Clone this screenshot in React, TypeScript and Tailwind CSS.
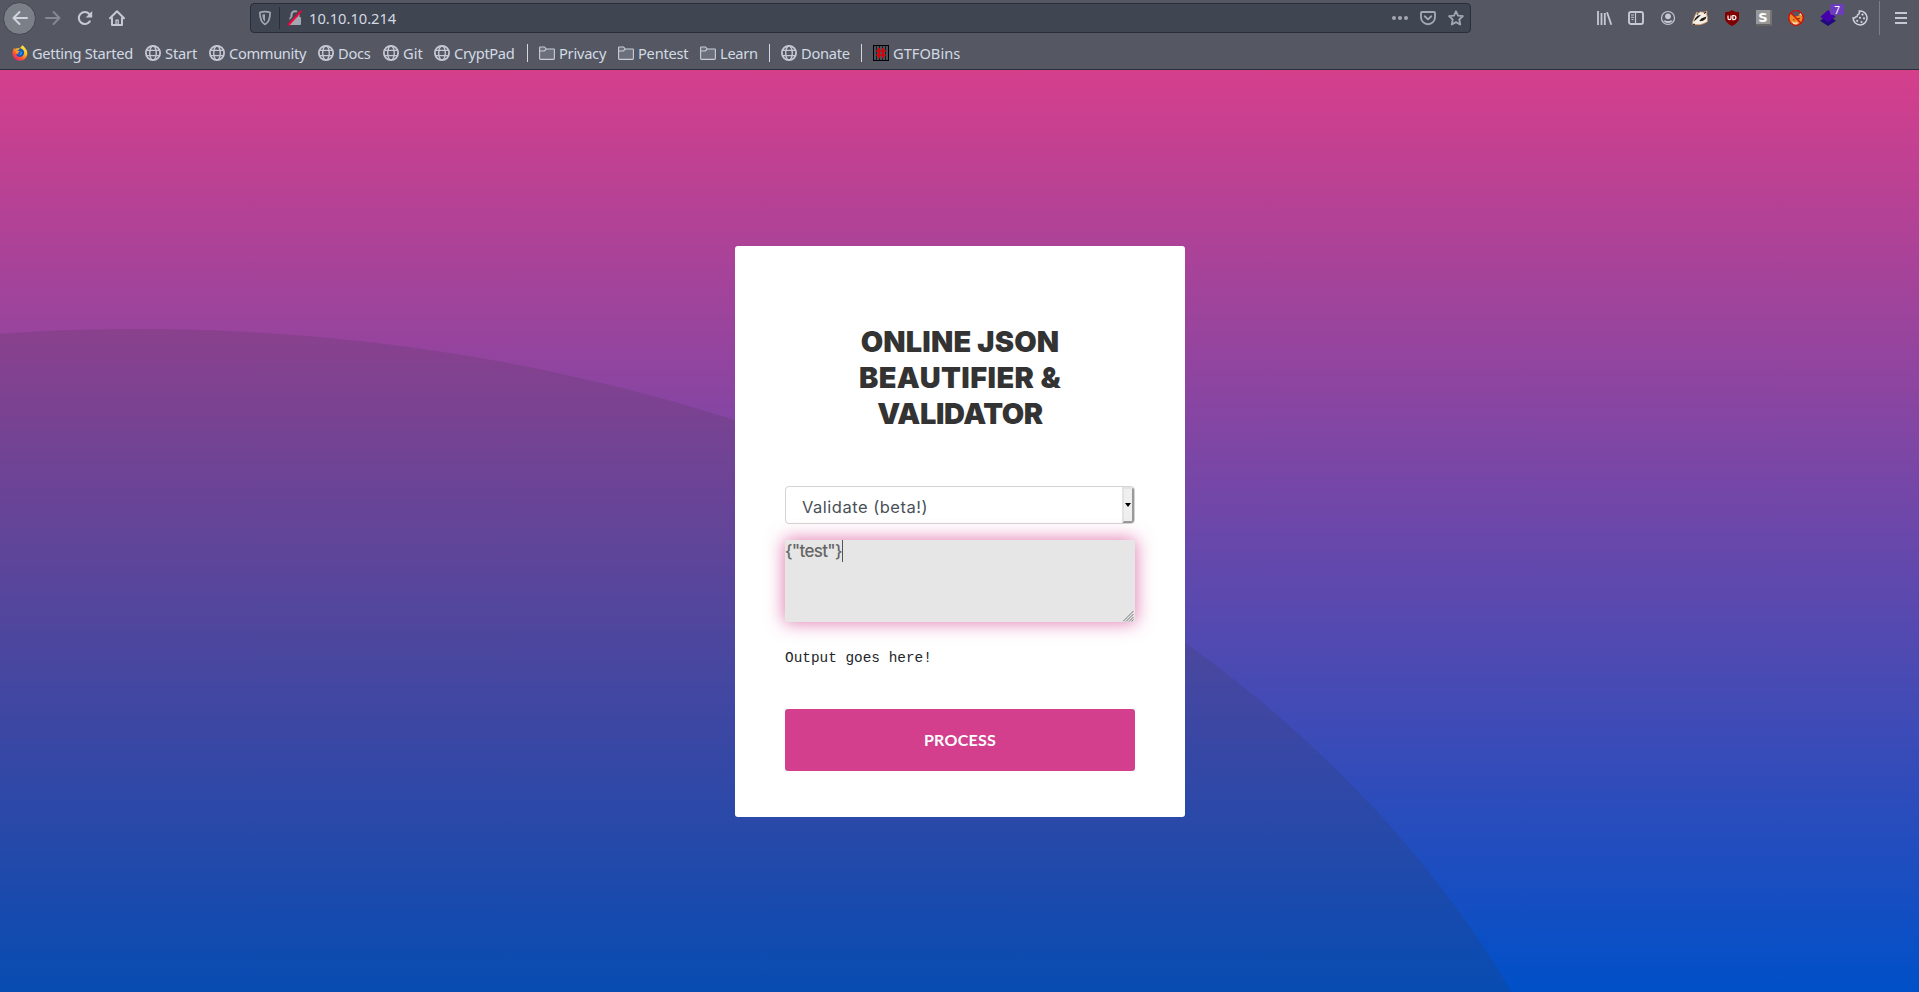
import type { ReactNode } from "react";

function Globe() {
  return (
    <svg width="16" height="16" viewBox="0 0 16 16" fill="none" stroke="#c5c9d4" strokeWidth="1.6" className="shrink-0">
      <circle cx="8" cy="8" r="7.1" strokeWidth="1.8" />
      <ellipse cx="8" cy="8" rx="3.3" ry="7" strokeWidth="1.4" />
      <path d="M1.6 5.3h12.8M1.6 10.7h12.8" strokeWidth="1.3" />
    </svg>
  );
}

function Folder() {
  return (
    <svg width="16" height="16" viewBox="0 0 16 16" className="shrink-0">
      <path
        d="M.6 13.6V2.6q0-.6.6-.6h4.4l1.6 2h7.6q.6 0 .6.6v9q0 .8-.8.8H1.4q-.8 0-.8-.8z"
        fill="#6b6f7b"
        stroke="#c9cdd6"
        strokeWidth="1.1"
      />
      <path d="M.8 6h4.6l1.8-1.8" fill="none" stroke="#c9cdd6" strokeWidth="1.1" />
    </svg>
  );
}

function Firefox() {
  return (
    <svg width="16" height="16" viewBox="0 0 16 16" className="shrink-0">
      <defs>
        <linearGradient id="flame" x1="0.85" y1="0" x2="0.15" y2="1">
          <stop offset="0" stopColor="#fff44f" />
          <stop offset="0.35" stopColor="#ffc01f" />
          <stop offset="0.65" stopColor="#ff5a2c" />
          <stop offset="1" stopColor="#e7157a" />
        </linearGradient>
      </defs>
      <path
        d="M10 .3c2.2 1.2 2.7 2.2 3.3 3.3.8.3 1.8 2 2 4.2C15.500 12.500 12 15.800 8 15.800S.500 12.600.500 8.300c0-2.300.8-4.200 2-5.500l.3 1.500c.8-.8 1.700-1 2.700-1C7 3.300 9.600 2.800 10 .3z"
        fill="url(#flame)"
      />
      <path d="M7.500 3.200c3 0 4.800 2.400 4.600 4.900-.2 2.400-1.900 4-4.100 3.900-2.100-.1-3.600-1.300-3.900-3.100 1 .7 2.300.6 3.300-.2H6C5 7.600 4.500 6.200 5.300 5.100c1.300.2 2-.6 2.200-1.900z" fill="#1556c4" />
      <path d="M8.300 5.800c1.500.5 2 2.200 1.100 3.500-.5.8-1.700 1-2.500.6 1.600-.6 2.300-2.200 1.400-4.100z" fill="#19b6ff" />
      <path d="M3.500 5.900c.8-.7 1.700-.7 2.600-.2l1.700.9-1.400 1.100-1 .8c-1 0-1.900-.9-1.900-2.600z" fill="#ff9b21" />
    </svg>
  );
}

function GtfoIcon() {
  return (
    <svg width="16" height="16" viewBox="0 0 16 16" className="shrink-0">
      <rect width="16" height="16" fill="#000" />
      <rect x="1" y="1" width="14" height="14" fill="#4e515a" />
      <path d="M3.500 1v14M6.500 1v14M9.500 1v14M12.500 1v14" stroke="#1c1e23" strokeWidth="1" />
      <path d="M6 3v10M10 3v10" stroke="#d0060c" strokeWidth="2" />
      <path d="M3 6h10M3 10h10" stroke="#d0060c" strokeWidth="1.600" />
    </svg>
  );
}

function Bookmark({ icon, label, className }: { icon: ReactNode; label: string; className: string }) {
  return (
    <a className={`flex h-full shrink-0 items-center gap-[4px] whitespace-nowrap ${className}`}>
      {icon}
      <span>{label}</span>
    </a>
  );
}

function Divider() {
  return (
    <div className="w-[12px] shrink-0">
      <div className="h-[18px] w-px bg-[#d3d6dd]" />
    </div>
  );
}

function Bookmarks() {
  return (
    <nav className="flex h-[33px] items-center pl-[12px] text-[14.667px] text-[#d3dae3]">
      <Bookmark icon={<Firefox />} label="Getting Started" className="w-[133px] tracking-[-0.3px]" />
      <Bookmark icon={<Globe />} label="Start" className="w-[64px] tracking-[-0.15px]" />
      <Bookmark icon={<Globe />} label="Community" className="w-[109px] tracking-[-0.35px]" />
      <Bookmark icon={<Globe />} label="Docs" className="w-[65px] tracking-[-0.25px]" />
      <Bookmark icon={<Globe />} label="Git" className="w-[51px]" />
      <Bookmark icon={<Globe />} label="CryptPad" className="w-[93px] tracking-[-0.35px]" />
      <Divider />
      <Bookmark icon={<Folder />} label="Privacy" className="w-[79px] tracking-[-0.25px]" />
      <Bookmark icon={<Folder />} label="Pentest" className="w-[82px] tracking-[-0.25px]" />
      <Bookmark icon={<Folder />} label="Learn" className="w-[69px] tracking-[-0.3px]" />
      <Divider />
      <Bookmark icon={<Globe />} label="Donate" className="w-[80px] tracking-[-0.3px]" />
      <Divider />
      <Bookmark icon={<GtfoIcon />} label="GTFOBins" className="w-[100px]" />
    </nav>
  );
}

function AddressBar() {
  return (
    <div className="flex h-[30px] w-[1221px] items-center rounded-[4px] border border-[#2b2e39] bg-[#404552] pl-[7px] pr-[6px]">
      <svg width="14" height="16" viewBox="0 0 14 16" fill="none">
        <path d="M7 1.600C5 1.600 3 2 1.900 2.500c0 5 .4 9.500 5.100 11.900 4.700-2.400 5.100-6.900 5.100-11.900C11 2 9 1.600 7 1.600z" stroke="#a3a7b2" strokeWidth="1.700" />
        <path d="M7 4.200c-1 0-1.800.1-2.600.4.1 3.300.4 5.500 2.600 7.100z" fill="#a3a7b2" />
      </svg>
      <div className="ml-[7px] h-[22px] w-px bg-[#2b2e39]" />
      <svg width="16" height="16" viewBox="0 0 16 16" fill="none" className="ml-[7px]">
        <path d="M4.500 8V4.800a3.500 3.500 0 0 1 7 0V8" stroke="#a3a7b2" strokeWidth="2" />
        <rect x="2.500" y="7" width="11.500" height="8" rx="1" fill="#a3a7b2" />
        <path d="M.2 14L12.600.4" stroke="#404552" strokeWidth="2" />
        <path d="M1.200 15.200L14.300.9" stroke="#f5033c" strokeWidth="2" />
      </svg>
      <span className="ml-[6px] text-[14.667px] text-[#d3dae3]">10.10.10.214</span>
      <div className="ml-auto flex items-center gap-[12px]">
        <svg width="16" height="16" viewBox="0 0 16 16" fill="#a3a7b2">
          <circle cx="2" cy="8" r="2" />
          <circle cx="8" cy="8" r="2" />
          <circle cx="14" cy="8" r="2" />
        </svg>
        <svg width="16" height="16" viewBox="0 0 16 16" fill="none" stroke="#a3a7b2" strokeWidth="1.900" strokeLinecap="round" strokeLinejoin="round">
          <path d="M2 2h12q1 0 1 1v4.200a7 7 0 0 1-14 0V3q0-1 1-1z" />
          <path d="M4.700 6.300L8 9.400l3.300-3.100" />
        </svg>
        <svg width="16" height="16" viewBox="0 0 16 16" fill="none" stroke="#a3a7b2" strokeWidth="1.800" strokeLinejoin="round">
          <path d="M8 1.300l2 4.300 4.900.6-3.600 3.300.9 5L8 12.100l-4.200 2.400.9-5L1.100 6.200 6 5.600z" />
        </svg>
      </div>
    </div>
  );
}

function ToolIcon({ children }: { children: ReactNode }) {
  return (
    <div className="flex h-8 w-8 items-center justify-center">
      <svg width="16" height="16" viewBox="0 0 16 16" fill="none" className="overflow-visible">
        {children}
      </svg>
    </div>
  );
}

function Extensions() {
  return (
    <div className="ml-auto flex items-center">
      <ToolIcon>
        <path d="M2 1v14M5.500 3v12M8.800 3v12" stroke="#c5c9d4" strokeWidth="1.800" />
        <path d="M11 2.200l4.300 12.600" stroke="#c5c9d4" strokeWidth="1.800" />
      </ToolIcon>
      <ToolIcon>
        <rect x="1" y="2" width="14" height="12" rx="2" stroke="#c5c9d4" strokeWidth="1.900" />
        <path d="M7.500 2v12" stroke="#c5c9d4" strokeWidth="1.200" />
        <path d="M3 5h3M3 7.300h3M3.500 9.600h2" stroke="#c5c9d4" />
      </ToolIcon>
      <ToolIcon>
        <circle cx="8" cy="8" r="6.500" stroke="#c5c9d4" strokeWidth="1.200" />
        <circle cx="8" cy="6.300" r="2.900" fill="#c5c9d4" />
        <path d="M3.400 10.500h2.300c1.200.8 3.400.8 4.600 0h2.300C11.500 12.300 10 13.200 8 13.200s-3.500-.9-4.600-2.700z" fill="#c5c9d4" />
      </ToolIcon>
      <ToolIcon>
        <path d="M3 5.500L4.500 2.300 6.500 3l2-1.200 3 .4L15 1l-.3 3 .9 3.500-.2 4.300-3.500 1.700-3.800 1.200H4L.3 14.500.8 11.500z" fill="#f6eee5" stroke="#cf8a50" strokeWidth=".7" />
        <path d="M3 8.500L5.500 5.700l3.500-1L7 7 4.500 9.300 1.800 11.500zM7.500 10.500l2.200-2.300 4.800-1.700-1 2.500-2.500 1.800-3 .5z" fill="#1e1e1e" />
        <path d="M4.700 4.300l1.500-.6M12 3.500l2-1.500M.8 14.200l2 .2" stroke="#222" strokeWidth="1.100" />
      </ToolIcon>
      <ToolIcon>
        <path d="M8 0C6 1.500 3.500 2.200 1 2.200v5.600c0 4 3 6.200 7 8.200 4-2 7-4.200 7-8.200V2.200C12.500 2.200 10 1.500 8 0z" fill="#800000" />
        <path d="M4 5.500v2.800q0 1.400 1.500 1.400T7 8.300V5.500" stroke="#fff" strokeWidth="1.200" />
        <path d="M8.800 5.500v4.200h1a2.100 2.100 0 0 0 0-4.200z" stroke="#fff" strokeWidth="1.200" />
      </ToolIcon>
      <div className="flex h-8 w-8 items-center justify-center">
        <div className="flex h-[16px] w-[16px] items-center justify-center border-b-2 border-r-2 border-b-[#656565] border-r-[#747474] bg-[#989898] font-['DejaVu_Sans'] text-[13px] font-bold leading-none text-white">
          S
        </div>
      </div>
      <ToolIcon>
        <path d="M1 7.500L2 3l3 2.500 3 1 3-1L14 2.500l1 5-1.500 4.200L9.500 15H6l-3.500-3z" fill="#ef8a24" />
        <path d="M3.500 11l3 1.500 3.500-.5-1 2.500-3 .3zM11 4.500l2.300-1.700.7 3z" fill="#f8dab1" />
        <path d="M9 8.800l3-.5M5 9.500l1.500.5" stroke="#913b10" strokeWidth="1.300" />
        <circle cx="8" cy="8" r="7.300" stroke="#d40d0d" strokeWidth="1.300" />
        <path d="M2.800 2.800l10.400 10.400" stroke="#d40d0d" strokeWidth="1.400" />
      </ToolIcon>
      <div className="relative">
        <ToolIcon>
          <path d="M8 5.500l8 5.300L8 16l-8-5.200z" fill="#210a7b" />
          <path d="M8 0l7.500 6.700L8 12.500.500 6.700z" fill="#4400aa" />
        </ToolIcon>
        <span className="absolute left-[18px] top-[2px] flex h-[11px] w-[14px] items-center justify-center rounded-[2px] bg-[#6c3cbb] text-[10px] leading-none text-white">
          7
        </span>
      </div>
      <ToolIcon>
        <path d="M8.700 1a7 7 0 1 0 6.200 7c-.9.3-1.900-.1-2.300-1-1.300.2-2.300-.8-2.100-2.100C9 4.400 8.200 2.800 8.700 1z" transform="matrix(-1 0 0 1 16 0)" stroke="#d0d3dc" strokeWidth="1.500" />
        <g fill="#d0d3dc">
          <circle cx="10.500" cy="4.600" r="1.100" />
          <circle cx="12" cy="8.300" r="1.100" />
          <circle cx="8" cy="7.800" r="1.100" />
          <circle cx="9.500" cy="12" r="1.100" />
          <circle cx="5.200" cy="10.800" r="1.100" />
        </g>
      </ToolIcon>
      <div className="ml-[3px] h-[34px] w-px bg-[#7b7f8a]" />
      <svg width="12" height="16" viewBox="0 0 12 16" className="ml-[15px]">
        <path d="M0 3h12M0 8h12M0 13h12" stroke="#c5c9d4" strokeWidth="2" />
      </svg>
    </div>
  );
}

function Toolbar() {
  return (
    <div className="flex h-[36px] items-center pl-[3px] pr-[12px]">
      <div className="flex h-[33px] w-[33px] items-center justify-center rounded-full border border-[#434651] bg-[#7b7f87]">
        <svg width="16" height="16" viewBox="0 0 16 16" fill="none" stroke="#d0d4dc" strokeWidth="2" strokeLinecap="round" strokeLinejoin="round">
          <path d="M15 8H1.500M7.500 2L1.500 8l6 6" />
        </svg>
      </div>
      <svg width="16" height="16" viewBox="0 0 16 16" fill="none" stroke="#858994" strokeWidth="2" strokeLinecap="round" strokeLinejoin="round" className="ml-[9px]">
        <path d="M1 8h13.500M8.500 2l6 6-6 6" />
      </svg>
      <svg width="16" height="16" viewBox="0 0 16 16" fill="none" className="ml-[16px]">
        <path d="M12.800 11.400A6 6 0 1 1 12.300 4" stroke="#c5c9d4" strokeWidth="2.100" strokeLinecap="round" />
        <path d="M15.200 1v6.500H8.700z" fill="#c5c9d4" />
      </svg>
      <svg width="16" height="16" viewBox="0 0 16 16" fill="none" stroke="#c5c9d4" strokeLinejoin="round" strokeLinecap="round" className="ml-[16px]">
        <path d="M1 8.200L8 1.300l7 6.900" strokeWidth="2" />
        <path d="M3 8v7h10V8" strokeWidth="2" />
        <path d="M7 14.500V10.200h2.200v4.300z" strokeWidth="1.300" />
      </svg>
      <div className="ml-[125px]">
        <AddressBar />
      </div>
      <Extensions />
    </div>
  );
}

function BeautifierCard() {
  return (
    <main className="relative flex h-[571px] w-[450px] flex-col rounded-[3px] bg-white px-[50px] pt-[78px] font-['Lato',sans-serif]">
      <h1 className="whitespace-nowrap text-center font-['Inter',sans-serif] text-[29px] font-black leading-[36px] text-[#333]">
        <span className="block tracking-[0.15px]">ONLINE JSON</span>
        <span className="block tracking-[0.4px]">BEAUTIFIER &amp;</span>
        <span className="block tracking-[-0.4px]">VALIDATOR</span>
      </h1>
      <div className="mt-[54px] flex h-[38px] justify-between rounded-[4px] border border-[#d4d4d4] bg-white">
        <span className="pl-[16px] pt-[8px] font-['Inter',sans-serif] text-[16.5px] leading-[24px] tracking-[0.5px] text-[#495057]">
          Validate (beta!)
        </span>
        <div className="flex w-[12px] items-center justify-center rounded-r-[3px] border-2 border-b-[#999] border-l-[#e3e3e3] border-r-[#999] border-t-[#e3e3e3] bg-[#efefef]">
          <svg width="6" height="4" viewBox="0 0 6 4" className="shrink-0">
            <path d="M0 0h6L3 4z" fill="#000" />
          </svg>
        </div>
      </div>
      <div className="mt-[16px] flex h-[82px] justify-between rounded-[2px] bg-[#e6e6e6] shadow-[0_0_18px_1px_rgba(211,63,141,0.68)]">
        <div className="flex h-[22px] items-center">
          <span className="font-['Inter',sans-serif] text-[17px] font-medium leading-[22px] tracking-[-0.7px] text-[#666]">{'{"test"}'}</span>
          <div className="h-[22px] w-px bg-[#555]" />
        </div>
        <svg width="11" height="11" viewBox="0 0 11 11" className="mr-px self-end">
          <path d="M0 10.500L10.500 0M3 10.500L10.500 3M6 10.500L10.500 6M8.500 10.500l2-2" stroke="#777" strokeWidth="1" />
        </svg>
      </div>
      <pre className="mt-[26px] font-['Liberation_Mono',monospace] text-[14.4px] leading-[21px] text-[#212529]">Output goes here!</pre>
      <button className="mt-[40px] flex h-[62px] shrink-0 items-center justify-center rounded-[3px] bg-[#d33f8d] text-[16px] font-bold tracking-[0.25px] text-white">
        PROCESS
      </button>
    </main>
  );
}

export default function App() {
  return (
    <div className="flex h-[992px] w-[1919px] flex-col overflow-hidden font-['Noto_Sans',sans-serif]">
      <header className="h-[70px] shrink-0 border-b border-[#2b2e39] bg-[#555863]">
        <Toolbar />
        <Bookmarks />
      </header>
      <div className="relative flex h-[922px] items-start justify-center overflow-hidden bg-[linear-gradient(to_bottom,#d53f8c,#0050c8)] pl-px pt-[176px]">
        <div className="absolute left-[-1357px] top-[259px] h-[2192px] w-[2990px] rounded-[50%] bg-[#333]/15" />
        <BeautifierCard />
      </div>
    </div>
  );
}
